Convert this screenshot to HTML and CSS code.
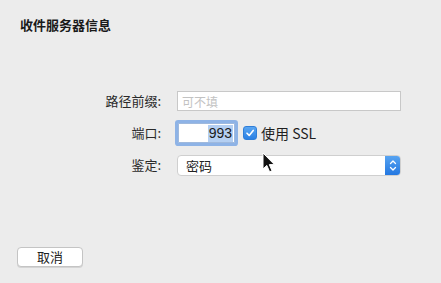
FILE: index.html
```html
<!DOCTYPE html>
<html lang="zh">
<head>
<meta charset="utf-8">
<link rel="stylesheet" href="styles.css">
</head>
<body>
<div class="sheet">
  <h1 class="title">收件服务器信息</h1>
  <div class="form">
    <label class="lbl">路径前缀:</label>
    <div class="field"><div class="text-input"><span class="placeholder">可不填</span></div></div>

    <label class="lbl">端口:</label>
    <div class="field port-row">
      <div class="port-input"><span class="sel">993</span></div>
      <span class="check">
        <svg width="10" height="10" viewBox="0 0 10 10"><path d="M2 5.2 L4.2 7.4 L8.2 2.4" fill="none" stroke="#fff" stroke-width="1.6" stroke-linecap="round" stroke-linejoin="round"/></svg>
      </span>
      <span class="check-label">使用 SSL</span>
    </div>

    <label class="lbl">鉴定:</label>
    <div class="field">
      <div class="select"><span class="select-text">密码</span>
        <span class="stepper">
          <svg width="8" height="13" viewBox="0 0 8 13"><path d="M1.5 4.5 L4 2 L6.5 4.5 M1.5 8.5 L4 11 L6.5 8.5" fill="none" stroke="#fff" stroke-width="1.3" stroke-linecap="round" stroke-linejoin="round"/></svg>
        </span>
      </div>
    </div>
  </div>
  <div class="footer">
    <button class="btn">取消</button>
  </div>
  <svg class="cursor" width="14" height="22" viewBox="0 0 14 22"><path d="M1 1 L1 17 L4.8 13.4 L7.6 19.8 L10 18.8 L7.3 12.6 L12.4 12.6 Z" fill="#111" stroke="#fff" stroke-width="1" stroke-linejoin="round"/></svg>
</div>
</body>
</html>
```
FILE: styles.css
```css
html, body { margin: 0; padding: 0; }
body {
  background: #ececec;
  font-family: "Noto Sans CJK SC", "Noto Sans", sans-serif;
  color: #222;
}
.sheet {
  position: relative;
  width: 441px;
  height: 283px;
  display: flex;
  flex-direction: column;
  box-sizing: border-box;
}
.title {
  margin: 15px 0 0 20px;
  font-size: 13px;
  font-weight: 700;
  line-height: 20px;
  color: #1a1a1a;
}
.form {
  margin: 54px 0 0 20px;
  display: grid;
  grid-template-columns: 141px 224px;
  grid-auto-rows: 24px;
  column-gap: 16px;
  row-gap: 8px;
  align-items: center;
}
.lbl {
  text-align: right;
  font-size: 13px;
  line-height: 24px;
  color: #2a2a2a;
}
.field { display: flex; align-items: center; height: 24px; }
.text-input {
  width: 224px;
  height: 20px;
  box-sizing: border-box;
  background: #fff;
  border: 1px solid #c8c8c8;
  display: flex;
  align-items: center;
  padding-left: 4px;
}
.placeholder { font-size: 12px; color: #c2c2c2; }
.port-row { gap: 0; }
.port-input {
  margin-left: 1px;
  width: 57px;
  height: 20px;
  box-sizing: border-box;
  background: #fff;
  border: 1px solid #9fb9dd;
  box-shadow: 0 0 0 3px #8eb3e6;
  border-radius: 1px;
  display: flex;
  align-items: center;
  justify-content: flex-end;
  padding-right: 1px;
}
.sel {
  background: #b4cff2;
  font-family: "Liberation Sans", "Noto Sans", sans-serif;
  font-size: 14px;
  line-height: 17px;
  color: #1a1a1a;
  padding: 0 1px;
}
.check {
  margin-left: 8px;
  width: 14px;
  height: 14px;
  border-radius: 3px;
  background: linear-gradient(#5aa6f2, #2a80e4);
  display: flex;
  align-items: center;
  justify-content: center;
  box-sizing: border-box;
  border: 1px solid #2f7ed8;
}
.check-label {
  margin-left: 4px;
  font-size: 14px;
  color: #1f1f1f;
}
.select {
  width: 224px;
  height: 21px;
  box-sizing: border-box;
  background: #fff;
  border: 1px solid #cfcfcf;
  border-radius: 4px;
  display: flex;
  align-items: center;
  justify-content: space-between;
  padding-left: 8px;
  overflow: hidden;
}
.select-text { font-size: 13px; color: #222; }
.stepper {
  width: 16px;
  height: 21px;
  margin-right: -1px;
  background: linear-gradient(#5aa6f2, #2175e0);
  border-radius: 0 4px 4px 0;
  display: flex;
  align-items: center;
  justify-content: center;
}
.footer {
  margin-top: auto;
  padding: 0 0 16px 17px;
}
.btn {
  width: 66px;
  height: 20px;
  background: #fff;
  border: 1px solid #c4c4c4;
  border-radius: 4px;
  font-family: "Noto Sans CJK SC", sans-serif;
  font-size: 13px;
  color: #222;
  padding: 0;
  line-height: 18px;
  box-shadow: 0 1px 0 #d4d4d4;
}
.cursor { position: absolute; left: 262px; top: 152px; }
```
